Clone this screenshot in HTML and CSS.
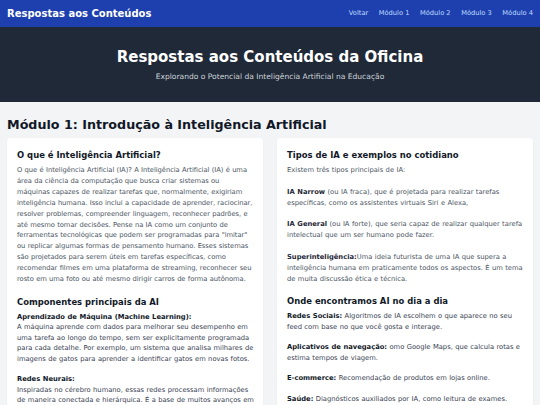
FILE: index.html
```html
<!DOCTYPE html>
<html lang="pt-BR">
<head>
<meta charset="utf-8">
<title>Respostas aos Conteúdos</title>
<link rel="stylesheet" href="styles.css">
</head>
<body>
<nav class="topbar">
  <span class="brand">Respostas aos Conteúdos</span>
  <div class="links">
    <a href="#">Voltar</a>
    <a href="#">Módulo 1</a>
    <a href="#">Módulo 2</a>
    <a href="#">Módulo 3</a>
    <a href="#">Módulo 4</a>
  </div>
</nav>
<header class="hero">
  <h1 class="hero-title">Respostas aos Conteúdos da Oficina</h1>
  <p class="hero-sub">Explorando o Potencial da Inteligência Artificial na Educação</p>
</header>
<main class="content">
  <h2 class="module-title">Módulo 1: Introdução à Inteligência Artificial</h2>
  <div class="grid">
    <section class="card">
      <h3 class="card-title">O que é Inteligência Artificial?</h3>
      <p class="text lines">O que é Inteligência Artificial (IA)? A Inteligência Artificial (IA) é uma<br>área da ciência da computação que busca criar sistemas ou<br>máquinas capazes de realizar tarefas que, normalmente, exigiriam<br>inteligência humana. Isso inclui a capacidade de aprender, raciocinar,<br>resolver problemas, compreender linguagem, reconhecer padrões, e<br>até mesmo tomar decisões. Pense na IA como um conjunto de<br>ferramentas tecnológicas que podem ser programadas para "imitar"<br>ou replicar algumas formas de pensamento humano. Esses sistemas<br>são projetados para serem úteis em tarefas específicas, como<br>recomendar filmes em uma plataforma de streaming, reconhecer seu<br>rosto em uma foto ou até mesmo dirigir carros de forma autônoma.</p>
      <h3 class="card-title second">Componentes principais da AI</h3>
      <p class="item lines"><strong>Aprendizado de Máquina (Machine Learning):</strong><br>A máquina aprende com dados para melhorar seu desempenho em<br>uma tarefa ao longo do tempo, sem ser explicitamente programada<br>para cada detalhe. Por exemplo, um sistema que analisa milhares de<br>imagens de gatos para aprender a identificar gatos em novas fotos.</p>
      <p class="item lines"><strong>Redes Neurais:</strong><br>Inspiradas no cérebro humano, essas redes processam informações<br>de maneira conectada e hierárquica. É a base de muitos avanços em<br>IA, como o reconhecimento de imagens e voz.</p>
    </section>
    <section class="card">
      <h3 class="card-title">Tipos de IA e exemplos no cotidiano</h3>
      <p class="text">Existem três tipos principais de IA:</p>
      <p class="text"><strong>IA Narrow</strong> (ou IA fraca), que é projetada para realizar tarefas específicas, como os assistentes virtuais Siri e Alexa,</p>
      <p class="text"><strong>IA General</strong> (ou IA forte), que seria capaz de realizar qualquer tarefa intelectual que um ser humano pode fazer.</p>
      <p class="text"><strong>Superinteligência:</strong>Uma ideia futurista de uma IA que supera a inteligência humana em praticamente todos os aspectos. É um tema de muita discussão ética e técnica.</p>
      <h3 class="card-title second">Onde encontramos AI no dia a dia</h3>
      <p class="item"><strong>Redes Sociais:</strong> Algoritmos de IA escolhem o que aparece no seu feed com base no que você gosta e interage.</p>
      <p class="item"><strong>Aplicativos de navegação:</strong> omo Google Maps, que calcula rotas e estima tempos de viagem.</p>
      <p class="item"><strong>E-commerce:</strong> Recomendação de produtos em lojas online.</p>
      <p class="item"><strong>Saúde:</strong> Diagnósticos auxiliados por IA, como leitura de exames.</p>
    </section>
  </div>
</main>
</body>
</html>
```

FILE: styles.css
```css
* { box-sizing: border-box; }
html, body { margin: 0; padding: 0; }
body {
  font-family: "DejaVu Sans", Verdana, sans-serif;
  background: #f3f4f6;
  color: #1f2937;
}
.topbar {
  height: 27px;
  background: #1e40af;
  display: flex;
  align-items: center;
  justify-content: space-between;
  padding: 0 7px;
}
.brand {
  color: #ffffff;
  font-weight: bold;
  font-size: 10px;
  line-height: 12px;
}
.links {
  display: flex;
  gap: 10.5px;
}
.links a {
  color: #bfdbfe;
  text-decoration: none;
  font-size: 6.7px;
  line-height: 9px;
}
.hero {
  background: #1f2937;
  height: 75px;
  text-align: center;
  padding-top: 21px;
}
.hero-title {
  margin: 0;
  color: #ffffff;
  font-size: 15px;
  line-height: 18px;
  font-weight: bold;
}
.hero-sub {
  margin: 6px 0 0;
  color: #d1d5db;
  font-size: 7.55px;
  line-height: 10px;
}
.content {
  padding: 0 7px;
}
.module-title {
  margin: 15px 0 5px;
  font-size: 12.7px;
  line-height: 16px;
  font-weight: bold;
  color: #111827;
}
.grid {
  display: grid;
  grid-template-columns: 1fr 1fr;
  gap: 14px;
}
.card {
  background: #ffffff;
  border-radius: 4px;
  box-shadow: 0 1px 2px rgba(0, 0, 0, 0.06);
  padding: 11px 8px 10px 10px;
  min-width: 0;
}
.card-title {
  margin: 0 0 4px;
  font-size: 8.45px;
  line-height: 12px;
  font-weight: bold;
  color: #111827;
}
.card-title.second {
  margin-top: 10px;
}
.text {
  margin: 0 0 10.8px;
  font-size: 6.75px;
  word-spacing: 0.25px;
  line-height: 10.9px;
  color: #4b5563;
}
.text strong { color: #1f2937; }
.text:last-of-type { margin-bottom: 0; }
.item {
  margin: 0 0 10px;
  font-size: 6.75px;
  word-spacing: 0.25px;
  line-height: 10.5px;
  color: #374151;
}
.item strong { color: #111827; }
.lines {
  white-space: nowrap;
}
.lines.text {
  letter-spacing: -0.05px;
}
```
